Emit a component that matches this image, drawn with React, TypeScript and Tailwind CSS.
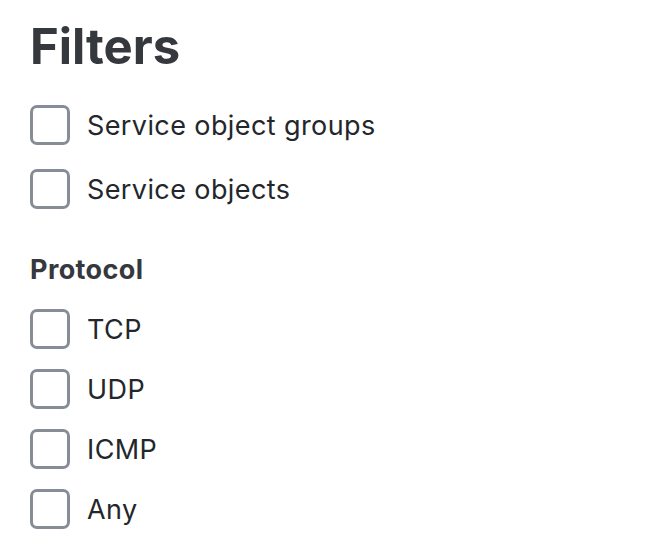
import { useState } from 'react';

interface CheckRowProps {
  label: string;
}

function CheckRow({ label }: CheckRowProps) {
  const [checked, setChecked] = useState(false);
  return (
    <label className="flex items-center gap-[17px] cursor-pointer">
      <span
        onClick={() => setChecked(!checked)}
        className={`w-10 h-10 rounded-[7px] border-[3px] border-[#868d96] ${checked ? 'bg-[#868d96]' : 'bg-white'}`}
      />
      <span className="text-[27px] leading-none tracking-[0.4px] text-[#23272c]">{label}</span>
    </label>
  );
}

export default function App() {
  return (
    <div
      className="w-[664px] h-[552px] bg-white pl-[30px] pt-[21px]"
      style={{ fontFamily: 'Inter, "Noto Sans", sans-serif' }}
    >
      {/* Title */}
      <h1 className="text-[49px] font-bold leading-[52px] text-[#35383d]">Filters</h1>

      {/* Object types */}
      <div className="mt-[32px] flex flex-col gap-6">
        <CheckRow label="Service object groups" />
        <CheckRow label="Service objects" />
      </div>

      {/* Protocol */}
      <div className="mt-[47px] text-[27px] font-bold leading-none tracking-[0.4px] text-[#35383d]">Protocol</div>
      <div className="mt-[26px] flex flex-col gap-5">
        <CheckRow label="TCP" />
        <CheckRow label="UDP" />
        <CheckRow label="ICMP" />
        <CheckRow label="Any" />
      </div>
    </div>
  );
}
